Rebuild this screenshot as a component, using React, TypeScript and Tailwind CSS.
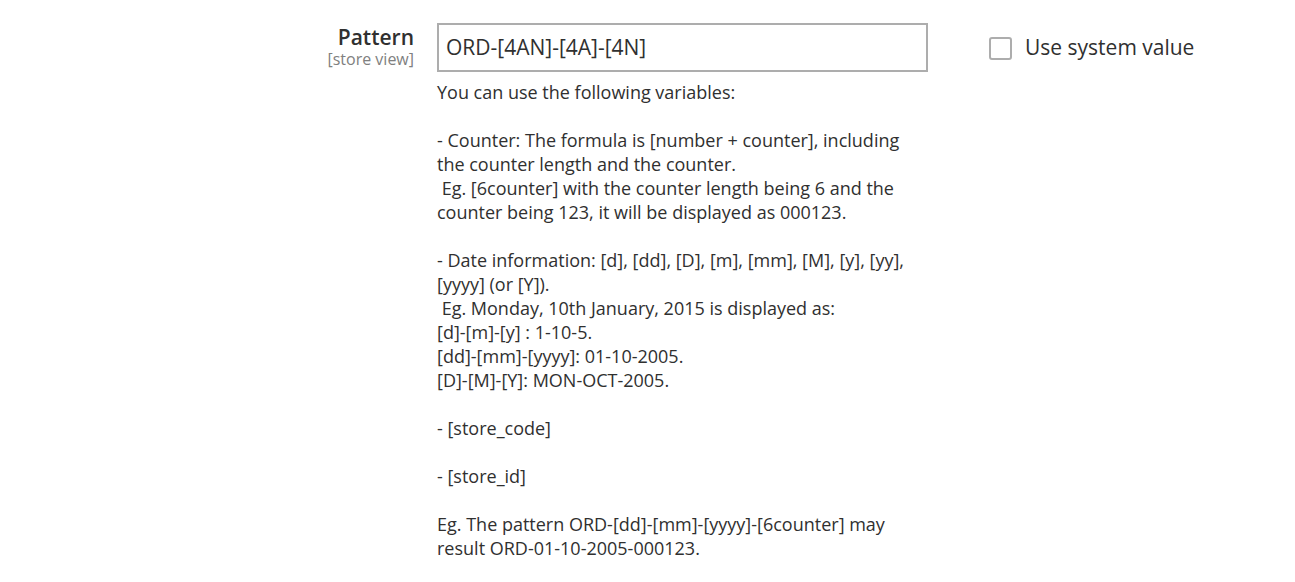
import React from "react";

const lines: string[] = [
  "You can use the following variables:",
  "",
  "- Counter: The formula is [number + counter], including",
  "the counter length and the counter.",
  "\u00a0Eg. [6counter] with the counter length being 6 and the",
  "counter being 123, it will be displayed as 000123.",
  "",
  "- Date information: [d], [dd], [D], [m], [mm], [M], [y], [yy],",
  "[yyyy] (or [Y]).",
  "\u00a0Eg. Monday, 10th January, 2015 is displayed as:",
  "[d]-[m]-[y] : 1-10-5.",
  "[dd]-[mm]-[yyyy]: 01-10-2005.",
  "[D]-[M]-[Y]: MON-OCT-2005.",
  "",
  "- [store_code]",
  "",
  "- [store_id]",
  "",
  "Eg. The pattern ORD-[dd]-[mm]-[yyyy]-[6counter] may",
  "result ORD-01-10-2005-000123.",
];

export default function App() {
  return (
    <div
      className="w-[1295px] h-[582px] bg-white overflow-hidden text-[#303030]"
      style={{ fontFamily: '"Open Sans", "Liberation Sans", sans-serif' }}
    >
      <div className="flex pt-[23px]">
        <div className="w-[414px] shrink-0 text-right pt-[2px]">
          <div className="text-[21px] font-semibold leading-[24px]">Pattern</div>
          <div className="text-[16px] leading-[20px] text-[#808080]">[store view]</div>
        </div>
        <div className="ml-[23px] w-[491px] shrink-0">
          <div className="h-[49px] border-2 border-[#adadad] bg-white flex items-center px-[7px] text-[21px] text-[#303030]">
            ORD-[4AN]-[4A]-[4N]
          </div>
          <div className="mt-[8px] text-[18px] leading-[24px]">
            {lines.map((l, i) => (
              <div key={i} className="h-[24px] whitespace-nowrap">
                {l}
              </div>
            ))}
          </div>
        </div>
        <div className="ml-[61px] flex items-start pt-[11px]">
          <div className="w-[23px] h-[23px] border-2 border-[#adadad] rounded-[3px] bg-white mt-[3px]" />
          <span className="ml-[13px] text-[21px] leading-[26px]">Use system value</span>
        </div>
      </div>
    </div>
  );
}
